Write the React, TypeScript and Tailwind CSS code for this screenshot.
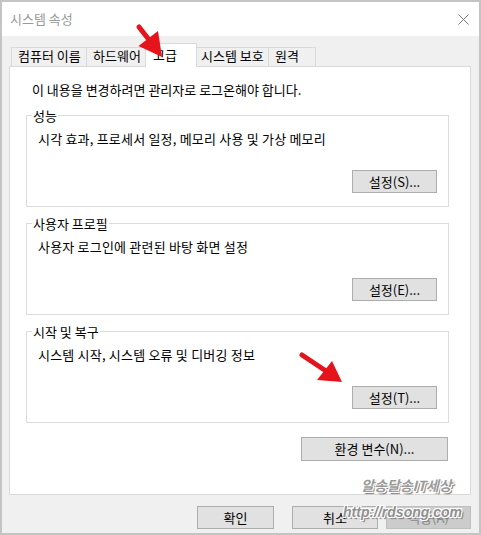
import React from "react";

const font = "font-['Noto_Sans_CJK_KR','Noto_Sans',sans-serif]";

function WinButton({
  label,
  className = "",
  disabled = false,
}: {
  label: string;
  className?: string;
  disabled?: boolean;
}) {
  return (
    <div
      className={
        "flex h-[23px] items-center justify-center border leading-[16px] " +
        (disabled
          ? "border-[#bfbfbf] bg-[#cccccc] text-[#8a8a8a] "
          : "border-[#adadad] bg-[#e1e1e1] text-black ") +
        className
      }
    >
      {label}
    </div>
  );
}

function Group({
  title,
  desc,
  button,
  className = "",
}: {
  title: string;
  desc: string;
  button: string;
  className?: string;
}) {
  return (
    <div
      className={
        "relative ml-[16px] flex h-[92px] w-[423px] flex-col border border-[#dcdcdc] " +
        className
      }
    >
      {/* legend sits on the top border */}
      <span className="absolute -top-2 left-[5px] bg-white px-[1px] leading-[16px]">
        {title}
      </span>
      <div className="pl-[11px] pt-[15px] leading-[16px] tracking-[0.2px]">{desc}</div>
      <WinButton label={button} className="mr-[11px] mt-[23px] w-[85px] self-end" />
    </div>
  );
}

export default function App() {
  const tabs = [
    { label: "컴퓨터 이름", w: "w-[75px]" },
    { label: "하드웨어", w: "w-[61px]" },
  ];

  return (
    <div className={"relative h-[535px] w-[481px] overflow-hidden bg-white text-[13px] text-black " + font}>
      <div className="flex h-full w-full flex-col border-2 border-[#c4c4c4] bg-[#f0f0f0]">
        {/* Title bar */}
        <div className="flex h-[34px] items-center justify-between bg-white pl-[8px] pr-[10px]">
          <span className="text-[#999999]">시스템 속성</span>
          <svg width="11" height="11" viewBox="0 0 11 11">
            <path d="M0.5 0.5 L10.5 10.5 M10.5 0.5 L0.5 10.5" stroke="#7a7a7a" strokeWidth="1" />
          </svg>
        </div>

        {/* Body */}
        <div className="flex flex-1 flex-col pl-[7px] pr-[8px] pt-[7px]">
          {/* Tabs */}
          <div className="flex h-[23px] items-end pl-[2px]">
            {tabs.map((t) => (
              <div
                key={t.label}
                className={"h-[19px] border-l border-t border-[#d9d9d9] pl-[6px] leading-[16px] " + t.w}
              >
                {t.label}
              </div>
            ))}
            <div className="relative z-10 -mx-[2px] -mb-px h-[24px] w-[52px] border-x border-t border-[#d9d9d9] bg-white pl-[7px] pt-[3px] leading-[16px]">
              고급
            </div>
            <div className="h-[19px] w-[73px] border-t border-[#d9d9d9] pl-[6px] leading-[16px]">
              시스템 보호
            </div>
            <div className="h-[19px] w-[48px] border-x border-t border-[#d9d9d9] pl-[6px] leading-[16px]">
              원격
            </div>
          </div>

          {/* Panel */}
          <div className="flex h-[429px] flex-col border border-[#d9d9d9] bg-white">
            <div className="pl-[22px] pt-[15px] leading-[16px]">
              이 내용을 변경하려면 관리자로 로그온해야 합니다.
            </div>
            <Group
              className="mt-[17px]"
              title="성능"
              desc="시각 효과, 프로세서 일정, 메모리 사용 및 가상 메모리"
              button="설정(S)..."
            />
            <Group
              className="mt-[16px]"
              title="사용자 프로필"
              desc="사용자 로그인에 관련된 바탕 화면 설정"
              button="설정(E)..."
            />
            <Group
              className="mt-[16px]"
              title="시작 및 복구"
              desc="시스템 시작, 시스템 오류 및 디버깅 정보"
              button="설정(T)..."
            />
            <WinButton label="환경 변수(N)..." className="mr-[22px] mt-[14px] h-[24px] w-[147px] self-end" />
          </div>

          {/* Dialog buttons */}
          <div className="mt-[11px] flex justify-end">
            <WinButton label="확인" className="w-[77px]" />
            <WinButton label="취소" className="ml-[18px] w-[86px]" />
            <WinButton label="적용(A)" className="ml-[8px] w-[85px]" disabled />
          </div>
        </div>
      </div>

      {/* Watermark */}
      <div className="pointer-events-none absolute left-[361px] top-[476px] z-20 font-['Noto_Sans_CJK_KR',sans-serif] text-[14px] font-bold italic leading-[18px] text-[#9a9a9a] [text-shadow:1px_1px_0_#ffffff,-1px_-1px_0_#ffffff,1px_-1px_0_#ffffff,-1px_1px_0_#ffffff,2px_2px_1px_#777777]">
        알송달송IT세상
      </div>
      <div className="pointer-events-none absolute left-[343px] top-[503px] z-20 font-['Liberation_Sans',sans-serif] text-[14px] font-bold italic leading-[18px] text-[#8f8f8f] [text-shadow:1px_1px_0_#ffffff,-1px_-1px_0_#ffffff,1px_-1px_0_#ffffff,-1px_1px_0_#ffffff,2px_2px_1px_#777777]">
        http://rdsong.com
      </div>

      {/* Red arrows */}
      <svg className="pointer-events-none absolute left-0 top-0 z-20" width="481" height="535" viewBox="0 0 481 535">
        <line x1="139" y1="27" x2="150" y2="41" stroke="#e5141c" strokeWidth="5" strokeLinecap="round" />
        <polygon points="162,57 138.5,46 158,31" fill="#e5141c" />
        <line x1="302" y1="355" x2="326" y2="371" stroke="#e5141c" strokeWidth="5" strokeLinecap="round" />
        <polygon points="342,382 317,380 332,361" fill="#e5141c" />
      </svg>
    </div>
  );
}
